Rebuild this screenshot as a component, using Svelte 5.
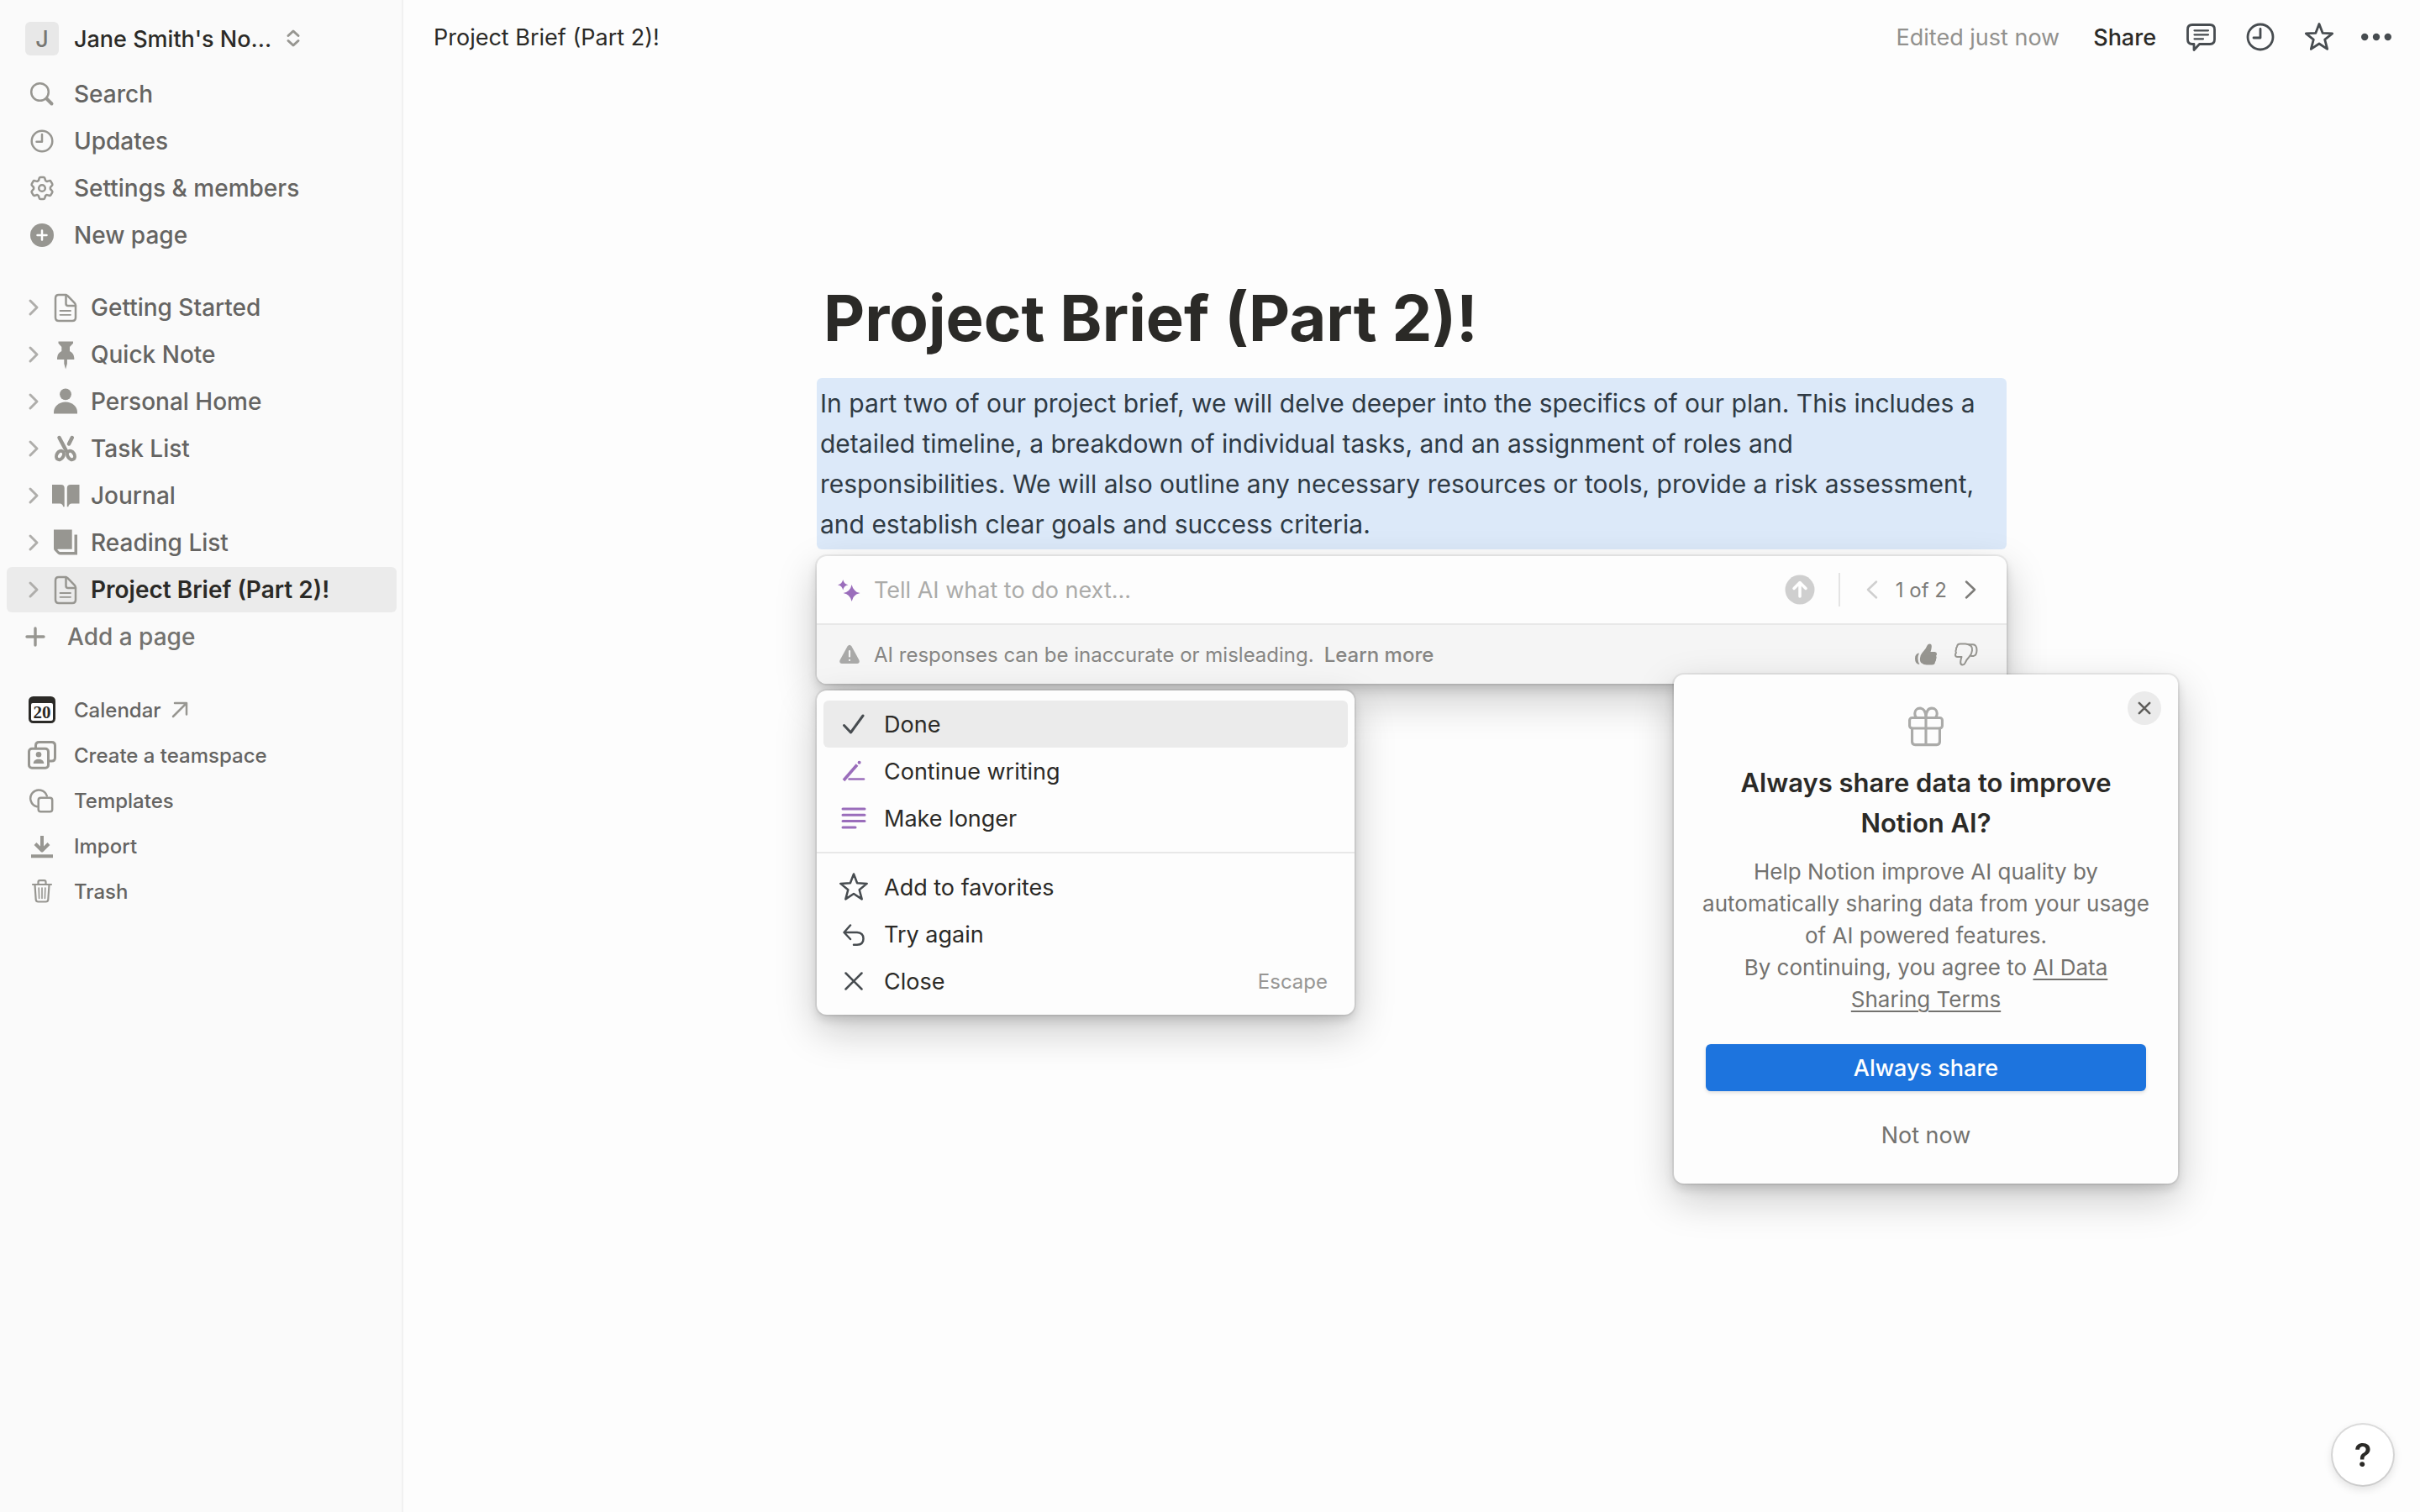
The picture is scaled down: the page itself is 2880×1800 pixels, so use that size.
<script>
    const gearTeeth = [0, 60, 120, 180, 240, 300]
        .map((a) => `<path transform="rotate(${a} 20 20)" d="M16 10.7L16.7 8.2Q17 6.9 18.3 6.9H21.7Q23 6.9 23.3 8.2L24 10.7Q24.9 11.9 26.05 11.89"/>`)
        .join('');

    const thumb = '<path d="M24.5 7.5q2.5.2 2.3 3.5-.2 3-1.3 6h5q2.5.2 2.5 2.3t-1 2.5q1.3 2 0 4 .3 2-1 3.2-.2 3.5-4 3.5h-6q-4 0-7-2.8-1.5-2-1-5.2.5-4.5 3.5-7.5 3.5-3.5 5-7.5.8-2 3-2z"/>';

    // every icon is drawn on a 40 x 40 grid
    const icons = {
        updown: '<path stroke-width="3" d="M14 16.5l6-5.5 6 5.5M14 22.5l6 5.5 6-5.5"/>',
        search: '<circle cx="17.5" cy="17.5" r="10.3"/><path stroke-width="4" d="M25.5 25.5l6 6"/>',
        clock: '<circle cx="20" cy="20" r="12.3"/><path d="M20 12v8.7h-6.5"/>',
        gear: gearTeeth + '<circle cx="20" cy="20" r="3.8"/>',
        newPage: '<circle cx="20" cy="20" r="14" fill="currentColor" stroke="none"/><path stroke="#fff" d="M20 14.5v11M14.5 20h11"/>',
        chevron: '<path stroke-width="3" d="M16 12l8 8-8 8"/>',
        prev: '<path d="M25 10.5L15 20l10 9.5"/>',
        next: '<path d="M15 10.5L25 20l-10 9.5"/>',
        doc: '<path d="M12 5h7.5q2 0 3.2 1.3l8 8.4q1.3 1.4 1.3 3.2v14q0 4-4 4H12q-4 0-4-4V9q0-4 4-4z"/><path d="M20.5 5v10.5q0 2.5 2.5 2.5h9"/><path stroke-width="1.8" d="M13.5 24H26M13.5 28.8H26"/>',
        pin: '<g fill="currentColor" stroke="none"><path d="M11.5 4.5H29v2.2L25 11v5q5 2.5 5.3 8v2H10v-2q.3-5.5 5.3-8v-5l-3.8-4.3z"/><path d="M18.3 26h3.6v5l-1.8 6.5-1.8-6.5z"/></g>',
        person: '<g fill="currentColor" stroke="none"><circle cx="20" cy="11.3" r="6.9"/><path d="M6 34.5v-2c0-7 6.5-12 14-12s14 5 14 12v2z"/></g>',
        scissors: '<path stroke-width="4.5" d="M12.5 7l8.5 16M27.8 7L24 14.5"/><g stroke-width="4"><ellipse cx="13.5" cy="28" rx="4" ry="5.5" transform="rotate(32 13.5 28)"/><ellipse cx="26.5" cy="28" rx="4" ry="5.5" transform="rotate(-32 26.5 28)"/></g>',
        book: '<g fill="currentColor" stroke="none"><path d="M4 7h10.5q4.2 0 4.2 4v22.3h-1.5q-.8-3.7-4-3.7H4z"/><path d="M36.5 7H26q-4.2 0-4.2 4v22.3h1.5q.8-3.7 4-3.7h9.2z"/></g>',
        reading: '<path fill="currentColor" stroke="none" d="M6 4.5h21.7v23.2H11q-1 .2-.5 1l2.5 2.3h17.5V10.5H34v24H14q-2 0-3.3-1.3l-3.4-3.4Q6 28.5 6 27z"/>',
        plus: '<path stroke-width="3.4" d="M20 10v20M10 20h20"/>',
        calendar: '<rect x="4" y="4" width="32" height="32" rx="5.5" fill="#2b2a27" stroke="none"/><rect x="7" y="12" width="26" height="21" rx="2" fill="#fff" stroke="none"/><text x="20" y="30" text-anchor="middle" font-family="Liberation Serif, serif" font-weight="700" font-size="21" fill="#2b2a27" stroke="none">20</text>',
        external: '<path d="M12 28l15.5-15.5M14 12h14v13.5"/>',
        teamspace: '<g stroke-width="3"><path d="M12.5 11V8.5q0-4 4-4h15q4 0 4 4v14.5q0 4-4 4h-3"/><rect x="4.5" y="12.2" width="23" height="23" rx="3.5"/></g><g fill="currentColor" stroke="none"><circle cx="16" cy="19.3" r="3.3"/><path d="M9.7 30c0-3.5 3-5.2 6.3-5.2s6.3 1.7 6.3 5.2z"/></g>',
        templates: '<path d="M25.8 14.5A10 10 0 1 0 14 27.2"/><rect x="15.7" y="16.7" width="16.5" height="16.5" rx="2.8"/>',
        import: '<g stroke-linecap="butt" stroke-width="4"><path d="M20 8v17M12 17.5l8 8 8-8M7 32.2h26"/></g>',
        trash: '<path stroke-width="2.2" d="M9 12h22M15.5 11.5V9q0-1.8 1.8-1.8h5.4q1.8 0 1.8 1.8v2.5M11.5 12.5l1.2 17.5q.2 2.5 2.8 2.5h9q2.6 0 2.8-2.5l1.2-17.5"/><path stroke-width="1.6" d="M16.2 16l.4 12.5M20 16v12.5M23.8 16l-.4 12.5"/>',
        comment: '<path d="M9 5.5h21q5.5 0 5.5 5.5v12q0 5.5-5.5 5.5H17.5L11 35.5v-7H9q-5.5 0-5.5-5.5V11q0-5.5 5.5-5.5z"/><path stroke-width="2.2" d="M11.5 12.3H28M11.5 17.3H28M11.5 22.3H22"/>',
        history: '<circle cx="20" cy="20" r="15"/><path d="M20 10.5v10.5h-8"/>',
        star: '<path d="M20 4.5L24.1 15.3 35.7 15.9 26.7 23.2 29.7 34.4 20 28 10.3 34.4 13.3 23.2 4.3 15.9 15.9 15.3z"/>',
        dots: '<g fill="currentColor" stroke="none"><circle cx="4.2" cy="20" r="4.2"/><circle cx="18" cy="20" r="4.2"/><circle cx="31.8" cy="20" r="4.2"/></g>',
        sparkle: '<g fill="currentColor" stroke="none"><path d="M23.6 14q1.6 8.4 10 10-8.4 1.6-10 10-1.6-8.4-10-10 8.4-1.6 10-10z"/><path d="M13.2 8q1 5.3 6.3 6.3-5.3 1-6.3 6.3-1-5.3-6.3-6.3 5.3-1 6.3-6.3z"/></g>',
        warning: '<path fill="currentColor" stroke="none" d="M17.5 10.5q2.5-3.5 5 0l9 16.5q1 4-2.5 4H11q-3.5 0-2.5-4z"/><path stroke="#f5f5f5" stroke-width="2.2" d="M20 16v6.5M20 26.8v.2"/>',
        send: '<circle cx="20" cy="20" r="17.5" fill="currentColor" stroke="none"/><path stroke="#fff" stroke-width="3.5" d="M20 28V12.5M13 18.5l7-7 7 7"/>',
        thumbUp: '<g fill="currentColor" stroke="none">' + thumb + '<path d="M12 18.5q-3.5 7 .5 13.5-5.5-.5-5.5-7 0-6 5-6.5z"/></g>',
        thumbDown: '<g stroke-width="2" transform="rotate(180 20 20)">' + thumb + '<path d="M14 18h-2.5q-4 .8-4 7 0 6.5 4.5 6.8h5"/></g>',
        check: '<path stroke-width="3" d="M8.5 21.5l8 8.5L31 10"/>',
        write: '<path stroke-width="3.6" stroke-linecap="butt" d="M8 31L24 12.5"/><path stroke-width="4" d="M26.6 9.7v.1"/><path d="M14.5 29.5H32"/>',
        longer: '<path stroke-width="3" d="M7 9h26M7 16.3h26M7 23.6h26M7 30.9h15"/>',
        undo: '<path d="M16 9.5L8.5 18l7.5 8M9.5 18H24q7.5.5 7.5 7.4t-7.5 7.4h-4"/>',
        close: '<path d="M10.5 10.5l19 19M29.5 10.5l-19 19"/>',
        gift: '<g stroke-width="2.6"><rect x="3.8" y="11.3" width="32.4" height="10.4" rx="2.5"/><path d="M6.3 21.7V35q0 3 3 3h21.4q3 0 3-3V21.7M20 11.3V38M20 11.3C20 4.5 17.5 1.8 14.2 1.8S9 4.3 9 6.8s1.2 4.5 2.5 4.5M20 11.3C20 4.5 22.5 1.8 25.8 1.8S31 4.3 31 6.8s-1.2 4.5-2.5 4.5"/></g>'
    };

    const menu = [
        { icon: 'search', label: 'Search' },
        { icon: 'clock', label: 'Updates' },
        { icon: 'gear', label: 'Settings & members' },
        { icon: 'newPage', label: 'New page' }
    ];

    const pages = [
        { icon: 'doc', label: 'Getting Started' },
        { icon: 'pin', label: 'Quick Note' },
        { icon: 'person', label: 'Personal Home' },
        { icon: 'scissors', label: 'Task List' },
        { icon: 'book', label: 'Journal' },
        { icon: 'reading', label: 'Reading List' },
        { icon: 'doc', label: 'Project Brief (Part 2)!' }
    ];

    const tools = [
        { icon: 'calendar', label: 'Calendar', external: true },
        { icon: 'teamspace', label: 'Create a teamspace' },
        { icon: 'templates', label: 'Templates' },
        { icon: 'import', label: 'Import' },
        { icon: 'trash', label: 'Trash' }
    ];

    const actions = [
        [
            { icon: 'check', label: 'Done' },
            { icon: 'write', label: 'Continue writing', ai: true },
            { icon: 'longer', label: 'Make longer', ai: true }
        ],
        [
            { icon: 'star', label: 'Add to favorites' },
            { icon: 'undo', label: 'Try again' },
            { icon: 'close', label: 'Close', key: 'Escape' }
        ]
    ];

    let current = $state('Project Brief (Part 2)!');
    let selected = $state('Done');
    let prompt = $state('');
    let showDialog = $state(true);
</script>

{#snippet icon(name)}
    <svg class="icon" viewBox="0 0 40 40" aria-hidden="true">{@html icons[name]}</svg>
{/snippet}

<div class="app">
    <nav class="sidebar">
        <button class="row workspace">
            <span class="avatar">J</span>
            <span>Jane Smith's No...</span>
            <span class="updown">{@render icon('updown')}</span>
        </button>

        <div class="group">
            {#each menu as item}
                <button class="row">{@render icon(item.icon)}<span>{item.label}</span></button>
            {/each}
        </div>

        <div class="group pages">
            {#each pages as page}
                <a class="row page" class:active={page.label === current} href="#page" onclick={() => (current = page.label)}>
                    <span class="toggle">{@render icon('chevron')}</span>
                    {@render icon(page.icon)}
                    <span>{page.label}</span>
                </a>
            {/each}
            <button class="row add">{@render icon('plus')}<span>Add a page</span></button>
        </div>

        <div class="tools">
            {#each tools as item}
                <button class="row">
                    {@render icon(item.icon)}
                    <span>{item.label}</span>
                    {#if item.external}<span class="external">{@render icon('external')}</span>{/if}
                </button>
            {/each}
        </div>
    </nav>

    <main>
        <header class="topbar">
            <span class="crumb">Project Brief (Part 2)!</span>
            <span class="edited">Edited just now</span>
            <button class="share">Share</button>
            <div class="top-icons">
                <button aria-label="Comments">{@render icon('comment')}</button>
                <button aria-label="History">{@render icon('history')}</button>
                <button aria-label="Favorite">{@render icon('star')}</button>
                <button aria-label="More">{@render icon('dots')}</button>
            </div>
        </header>

        <article>
            <h1>Project Brief (Part 2)!</h1>
            <p class="block">
                In part two of our project brief, we will delve deeper into the specifics of our plan. This includes a
                detailed timeline, a breakdown of individual tasks, and an assignment of roles and responsibilities. We
                will also outline any necessary resources or tools, provide a risk assessment, and establish clear goals
                and success criteria.
            </p>

            <div class="assistant">
                <section class="panel prompt">
                    <div class="prompt-row">
                        <span class="purple">{@render icon('sparkle')}</span>
                        <input type="text" aria-label="Prompt" placeholder="Tell AI what to do next..." bind:value={prompt} />
                        <button class="send" aria-label="Send">{@render icon('send')}</button>
                        <div class="pager">
                            <button class="prev" aria-label="Previous">{@render icon('prev')}</button>
                            <span>1 of 2</span>
                            <button aria-label="Next">{@render icon('next')}</button>
                        </div>
                    </div>
                    <div class="notice">
                        <span class="warn">{@render icon('warning')}</span>
                        <span>AI responses can be inaccurate or misleading.</span>
                        <a href="#learn">Learn more</a>
                        <div class="votes">
                            <button aria-label="Good response">{@render icon('thumbUp')}</button>
                            <button aria-label="Bad response">{@render icon('thumbDown')}</button>
                        </div>
                    </div>
                </section>

                <section class="panel actions">
                    {#each actions as group}
                        <div class="action-group">
                            {#each group as action}
                                <button class="action" class:selected={action.label === selected} onmouseenter={() => (selected = action.label)}>
                                    <span class:purple={action.ai}>{@render icon(action.icon)}</span>
                                    <span>{action.label}</span>
                                    {#if action.key}<span class="key">{action.key}</span>{/if}
                                </button>
                            {/each}
                        </div>
                    {/each}
                </section>

                {#if showDialog}
                    <section class="panel dialog" role="dialog" aria-labelledby="dialog-title">
                        <button class="dismiss" aria-label="Dismiss" onclick={() => (showDialog = false)}>{@render icon('close')}</button>
                        <span class="gift">{@render icon('gift')}</span>
                        <h2 id="dialog-title">Always share data to improve Notion AI?</h2>
                        <p>Help Notion improve AI quality by automatically sharing data from your usage of AI powered features.</p>
                        <p>By continuing, you agree to <a href="#terms">AI Data Sharing&nbsp;Terms</a></p>
                        <button class="primary">Always share</button>
                        <button class="secondary" onclick={() => (showDialog = false)}>Not now</button>
                    </section>
                {/if}
            </div>
        </article>

        <button class="help" aria-label="Help">?</button>
    </main>
</div>

<style>
    :global(body) {
        background: #fdfdfd;
    }

    .app {
        display: flex;
        min-height: 100vh;
        font-family: Inter, "Liberation Sans", sans-serif;
        font-size: 27px;
        color: #2b2a27;
    }

    button,
    input {
        font: inherit;
        color: inherit;
        border: 0;
        padding: 0;
        background: none;
    }
    button {
        cursor: pointer;
    }
    a {
        color: inherit;
        text-decoration: none;
    }

    .icon {
        display: block;
        flex: none;
        width: 40px;
        height: 40px;
        fill: none;
        stroke: currentColor;
        stroke-width: 2.5;
        stroke-linecap: round;
        stroke-linejoin: round;
    }

    /* sidebar */
    .sidebar {
        flex: none;
        box-sizing: border-box;
        width: 480px;
        padding: 19px 6px 40px 8px;
        background: #fafafa;
        border-right: 2px solid #f1f1f1;
    }
    .row {
        display: flex;
        align-items: center;
        box-sizing: border-box;
        width: 100%;
        height: 54px;
        padding-left: 22px;
        gap: 18px;
        border-radius: 6px;
        font-size: 28px;
        font-weight: 500;
        color: #656462;
        text-align: left;
        white-space: nowrap;
    }
    .row > :global(.icon),
    .updown,
    .external {
        color: #979691;
    }
    .workspace {
        margin-bottom: 12px;
        color: #2b2a27;
        font-size: 27px;
    }
    .avatar {
        display: flex;
        align-items: center;
        justify-content: center;
        width: 40px;
        height: 40px;
        border-radius: 6px;
        background: #e8e8e8;
        color: #777673;
    }
    .updown {
        margin-left: -12px;
    }
    .external {
        margin-left: -16px;
    }
    .group {
        display: flex;
        flex-direction: column;
        gap: 2px;
    }
    .pages {
        margin: 32px 0 33px;
    }
    .page {
        padding-left: 12px;
        gap: 10px;
    }
    .toggle {
        margin-right: -12px;
        color: #afaeab;
    }
    .active {
        background: #ebebeb;
        color: #2b2a27;
        font-weight: 600;
    }
    .add {
        padding-left: 14px;
        color: #73726f;
    }
    .tools .row {
        font-size: 24px;
    }

    /* top bar */
    main {
        flex: 1;
        min-width: 0;
    }
    .topbar {
        display: flex;
        align-items: center;
        height: 88px;
        padding: 0 30px 0 36px;
    }
    .crumb {
        flex: 1;
    }
    .edited {
        color: #92918e;
    }
    .share {
        margin: 0 34px 0 40px;
        font-weight: 500;
    }
    .top-icons {
        display: flex;
        gap: 30px;
        color: #474c50;
    }
    .top-icons :global(.icon) {
        stroke-width: 2.8;
    }

    /* document */
    article {
        max-width: 1416px;
        margin: 242px auto 0;
    }
    h1 {
        margin: 0 0 24px;
        padding-left: 8px;
        font-size: 76px;
        line-height: 96px;
        font-weight: 700;
    }
    .block {
        margin: 0;
        padding: 6px 30px 6px 4px;
        border-radius: 6px;
        background: #dce9f9;
        color: #2f3a44;
        font-size: 30px;
        line-height: 48px;
    }

    .assistant {
        position: relative;
        display: flex;
        flex-direction: column;
        gap: 8px;
        margin-top: 8px;
    }
    .panel {
        border-radius: 12px;
        background: #fdfdfd;
        box-shadow:
            0 0 0 2px rgba(15, 15, 15, 0.06),
            0 6px 12px rgba(15, 15, 15, 0.14),
            0 18px 48px rgba(15, 15, 15, 0.22);
    }
    .prompt-row,
    .notice {
        display: flex;
        align-items: center;
        box-sizing: border-box;
        padding: 0 32px 0 18px;
    }
    .prompt-row {
        height: 80px;
    }
    .purple {
        color: #9a6dbb;
    }
    input {
        flex: 1;
        margin-left: 10px;
        outline: none;
    }
    input::placeholder {
        color: #ababa9;
        opacity: 1;
    }
    .send {
        color: #cfcfcf;
    }
    .pager {
        display: flex;
        align-items: center;
        height: 40px;
        margin-left: 26px;
        padding-left: 18px;
        gap: 8px;
        border-left: 2px solid #e4e4e4;
        color: #7d7c79;
        font-size: 24px;
    }
    .pager .prev {
        color: #cfcfcf;
    }
    .pager button:last-child {
        margin-right: -9px;
    }
    .notice {
        height: 72px;
        border-top: 2px solid #e8e8e8;
        border-radius: 0 0 12px 12px;
        background: #f5f5f5;
        color: #868583;
        font-size: 24px;
    }
    .notice a {
        margin-left: 12px;
        font-weight: 500;
    }
    .warn {
        margin: 0 9px 0 1px;
        color: #a9a9a8;
    }
    .votes {
        display: flex;
        gap: 8px;
        margin: 0 -4px 0 auto;
        color: #979691;
    }

    .actions {
        width: 640px;
    }
    .action-group {
        padding: 12px 8px;
    }
    .action-group + .action-group {
        border-top: 2px solid #e8e8e8;
    }
    .action {
        display: flex;
        align-items: center;
        width: 100%;
        height: 56px;
        padding: 0 24px 0 16px;
        gap: 16px;
        border-radius: 6px;
        color: #2b2a27;
    }
    .action > span:first-child:not(.purple) {
        color: #474c50;
    }
    .action.selected {
        background: #ebebeb;
    }
    .key {
        margin-left: auto;
        color: #979694;
        font-size: 24px;
    }

    /* consent dialog, floats over the page from the assistant's lower right */
    .dialog {
        position: absolute;
        top: 141px;
        right: -204px;
        display: flex;
        flex-direction: column;
        align-items: center;
        box-sizing: border-box;
        width: 600px;
        padding: 38px 38px 30px;
        text-align: center;
    }
    .dismiss {
        position: absolute;
        top: 20px;
        right: 20px;
        display: flex;
        align-items: center;
        justify-content: center;
        width: 40px;
        height: 40px;
        border-radius: 50%;
        background: #ebebeb;
        color: #5f5e5b;
    }
    .dismiss :global(.icon) {
        width: 26px;
        height: 26px;
        stroke-width: 4;
    }
    .gift {
        color: #ababa9;
    }
    .gift :global(.icon) {
        width: 48px;
        height: 48px;
    }
    h2 {
        margin: 19px 0 15px;
        font-size: 31px;
        line-height: 48px;
        font-weight: 600;
    }
    .dialog p {
        margin: 0 -10px;
        color: #73726f;
        font-size: 26px;
        line-height: 38px;
    }
    .dialog p a {
        text-decoration: underline;
        text-decoration-thickness: 2px;
        text-underline-offset: 4px;
    }
    .primary,
    .secondary {
        width: 100%;
        height: 56px;
        border-radius: 6px;
    }
    .primary {
        margin: 34px 0 24px;
        background: #1d74de;
        box-shadow: 0 2px 4px rgba(15, 15, 15, 0.12);
        color: #fff;
        font-weight: 500;
    }
    .secondary {
        color: #73726f;
    }

    .help {
        position: fixed;
        right: 32px;
        bottom: 32px;
        width: 72px;
        height: 72px;
        border-radius: 50%;
        background: #fff;
        box-shadow:
            0 0 0 2px rgba(15, 15, 15, 0.12),
            0 4px 12px rgba(15, 15, 15, 0.14);
        font-size: 38px;
        font-weight: 600;
    }
</style>
